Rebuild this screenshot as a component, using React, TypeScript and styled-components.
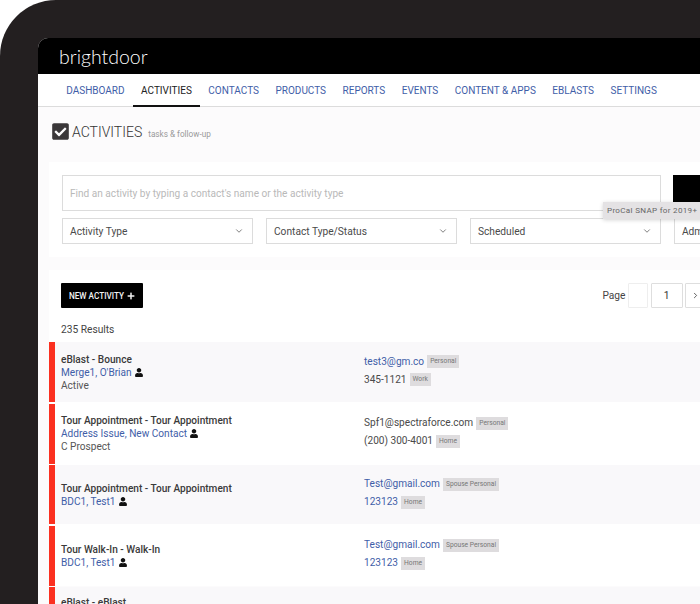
import React from "react";
import styled, { createGlobalStyle } from "styled-components";
import { FaCheckSquare, FaPlus, FaUser } from "react-icons/fa";
import { ChevronDown, ChevronRight } from "lucide-react";

const GlobalStyle = createGlobalStyle`
  html, body {
    margin: 0;
    padding: 0;
    background: #fff;
  }
  body {
    font-family: Roboto, "Liberation Sans", sans-serif;
  }
`;

const Device = styled.div`
  width: 700px;
  height: 604px;
  box-sizing: border-box;
  padding: 38px 0 0 38px;
  background: #231f20;
  border-top-left-radius: 56px;
  overflow: hidden;
`;

const Screen = styled.div`
  position: relative;
  width: 662px;
  height: 566px;
  background: #fcfbfc;
  border-top-left-radius: 10px;
  overflow: hidden;
`;

const TopBar = styled.header`
  height: 36px;
  padding-left: 21px;
  display: flex;
  align-items: center;
  background: #000;
`;

const Logo = styled.div`
  color: #fff;
  font-family: Lato, sans-serif;
  font-weight: 300;
  font-size: 19.5px;
`;

const Nav = styled.nav`
  height: 33px;
  box-sizing: border-box;
  padding-left: 20px;
  display: flex;
  background: #fff;
  border-bottom: 1px solid #dcdcdc;
`;

const NavItem = styled.a<{ $active?: boolean }>`
  padding: 0 8.25px;
  height: 33px;
  box-sizing: border-box;
  line-height: 33px;
  font-size: 10px;
  white-space: nowrap;
  color: ${(p) => (p.$active ? "#222" : "#3f5ea8")};
  border-bottom: 2px solid ${(p) => (p.$active ? "#111" : "transparent")};
`;

const Heading = styled.div`
  height: 55px;
  padding: 15px 0 0 14px;
  box-sizing: border-box;
  display: flex;
  align-items: flex-start;
  color: #3a3739;

  svg {
    width: 17px;
    height: 19px;
  }
`;

const HeadingRow = styled.div`
  height: 19px;
  display: flex;
  align-items: center;
`;

const HeadingTitle = styled.h1`
  margin: 0 6px 0 3px;
  font-size: 14px;
  font-weight: 300;
  color: #333;
`;

const HeadingSub = styled.span`
  font-size: 8.2px;
  margin-top: 5px;
  color: #999;
`;

const Panel = styled.section`
  margin-left: 11px;
  background: #fff;
`;

const FilterPanel = styled(Panel)`
  height: 95px;
  padding: 13px 0 0 13px;
  box-sizing: border-box;
`;

const SearchRow = styled.div`
  display: flex;
  gap: 12px;
`;

const SearchBox = styled.div`
  width: 599px;
  height: 36px;
  flex: none;
  box-sizing: border-box;
  padding-left: 7px;
  display: flex;
  align-items: center;
  border: 1px solid #dcdcdc;
  font-size: 10.1px;
  color: #b9b9b9;
`;

const SearchButton = styled.div`
  width: 60px;
  height: 36px;
  flex: none;
  background: #000;
`;

const SelectRow = styled.div`
  margin-top: 7px;
  display: flex;
  gap: 12.7px;
`;

const Select = styled.div`
  width: 191.3px;
  height: 26px;
  flex: none;
  box-sizing: border-box;
  padding: 0 8px 0 7px;
  display: flex;
  align-items: center;
  justify-content: space-between;
  border: 1px solid #dcdcdc;
  font-size: 10.2px;
  color: #4a4a4a;
  white-space: nowrap;

  svg {
    width: 10px;
    height: 10px;
    color: #666;
  }
`;

const Tooltip = styled.div`
  position: absolute;
  left: 565px;
  top: 164px;
  height: 17px;
  width: 110px;
  box-sizing: border-box;
  padding-left: 4px;
  line-height: 17px;
  background: #e4e2e4;
  box-shadow: 0 1px 4px rgba(0, 0, 0, 0.18);
  font-size: 8.1px;
  letter-spacing: 0.3px;
  color: #666;
  white-space: nowrap;
`;

const ResultsPanel = styled(Panel)`
  margin-top: 13px;
  height: 296px;
`;

const Toolbar = styled.div`
  height: 72px;
  padding: 13px 0 0 12px;
  box-sizing: border-box;
  display: flex;
  justify-content: space-between;
  align-items: flex-start;
`;

const ToolbarLeft = styled.div`
  display: flex;
  flex-direction: column;
  gap: 16px;
`;

const NewButton = styled.div`
  width: 82px;
  height: 25px;
  display: flex;
  align-items: center;
  justify-content: center;
  gap: 3px;
  background: #000;
  border-radius: 1px;
  color: #f2f2f2;
  font-size: 8.2px;
  font-weight: 500;

  svg {
    width: 8px;
    height: 8px;
  }
`;

const ResultCount = styled.div`
  font-size: 10.2px;
  color: #444;
`;

const Pager = styled.div`
  margin-right: -5px;
  display: flex;
  align-items: center;
  gap: 2.5px;
  font-size: 10.2px;
  color: #444;
`;

const PageBox = styled.div<{ $width: number; $faded?: boolean }>`
  width: ${(p) => p.$width}px;
  height: 25px;
  box-sizing: border-box;
  display: flex;
  align-items: center;
  justify-content: center;
  border: 1px solid ${(p) => (p.$faded ? "#eee" : "#dedede")};
  border-radius: 1px;
  color: #333;

  svg {
    width: 9px;
    height: 9px;
  }
`;

const Row = styled.div<{ $shaded: boolean; $height: number }>`
  height: ${(p) => p.$height}px;
  margin-bottom: 1.5px;
  display: flex;
  border-left: 6px solid #fb3020;
  background: ${(p) => (p.$shaded ? "#f9f8fa" : "#fff")};
`;

const RowMain = styled.div`
  width: 309px;
  flex: none;
  box-sizing: border-box;
  padding-left: 6px;
  display: flex;
  flex-direction: column;
  justify-content: center;
  font-size: 10.1px;
  line-height: 13px;
  color: #555;
`;

const RowTitle = styled.div`
  font-weight: 500;
  color: #3a3a3a;
`;

const RowLink = styled.div`
  display: flex;
  align-items: center;
  gap: 3px;
  color: #3f5ea8;

  svg {
    width: 8px;
    height: 9px;
    color: #111;
  }
`;

const RowContact = styled.div`
  padding-bottom: 4px;
  display: flex;
  flex-direction: column;
  justify-content: center;
  gap: 4px;
  font-size: 10.1px;
`;

const ContactLine = styled.div<{ $link?: boolean }>`
  height: 14px;
  display: flex;
  align-items: center;
  gap: 3px;
  color: ${(p) => (p.$link ? "#3f5ea8" : "#4a4a4a")};
`;

const Tag = styled.span`
  height: 13px;
  padding: 0 3px;
  margin-top: 1px;
  line-height: 13px;
  background: #dedcde;
  font-size: 6.7px;
  color: #777;
`;

type Activity = {
  title: string;
  name?: string;
  status?: string;
  height: number;
  email?: [string, string, boolean];
  phone?: [string, string, boolean];
};

const activities: Activity[] = [
  {
    title: "eBlast - Bounce",
    name: "Merge1, O'Brian",
    status: "Active",
    height: 60,
    email: ["test3@gm.co", "Personal", true],
    phone: ["345-1121", "Work", false],
  },
  {
    title: "Tour Appointment - Tour Appointment",
    name: "Address Issue, New Contact",
    status: "C Prospect",
    height: 60,
    email: ["Spf1@spectraforce.com", "Personal", false],
    phone: ["(200) 300-4001", "Home", false],
  },
  {
    title: "Tour Appointment - Tour Appointment",
    name: "BDC1, Test1",
    height: 59,
    email: ["Test@gmail.com", "Spouse Personal", true],
    phone: ["123123", "Home", true],
  },
  {
    title: "Tour Walk-In - Walk-In",
    name: "BDC1, Test1",
    height: 60,
    email: ["Test@gmail.com", "Spouse Personal", true],
    phone: ["123123", "Home", true],
  },
  // only the top of this row is on screen
  { title: "eBlast - eBlast", height: 30 },
];

const navItems = [
  "DASHBOARD",
  "ACTIVITIES",
  "CONTACTS",
  "PRODUCTS",
  "REPORTS",
  "EVENTS",
  "CONTENT & APPS",
  "EBLASTS",
  "SETTINGS",
];

const App: React.FC = () => {
  return (
    <Device>
      <GlobalStyle />
      <Screen>
        <TopBar>
          <Logo>brightdoor</Logo>
        </TopBar>
        <Nav>
          {navItems.map((item) => (
            <NavItem key={item} $active={item === "ACTIVITIES"}>
              {item}
            </NavItem>
          ))}
        </Nav>
        <Heading>
          <HeadingRow>
            <FaCheckSquare />
            <HeadingTitle>ACTIVITIES</HeadingTitle>
            <HeadingSub>tasks &amp; follow-up</HeadingSub>
          </HeadingRow>
        </Heading>
        <FilterPanel>
          <SearchRow>
            <SearchBox>
              Find an activity by typing a contact's name or the activity type
            </SearchBox>
            <SearchButton />
          </SearchRow>
          <SelectRow>
            <Select>
              Activity Type
              <ChevronDown />
            </Select>
            <Select>
              Contact Type/Status
              <ChevronDown />
            </Select>
            <Select>
              Scheduled
              <ChevronDown />
            </Select>
            <Select>Admin</Select>
          </SelectRow>
        </FilterPanel>
        <Tooltip>ProCal SNAP for 2019+</Tooltip>
        <ResultsPanel>
          <Toolbar>
            <ToolbarLeft>
              <NewButton>
                NEW ACTIVITY
                <FaPlus />
              </NewButton>
              <ResultCount>235 Results</ResultCount>
            </ToolbarLeft>
            <Pager>
              <span>Page</span>
              <PageBox $width={20} $faded />
              <PageBox $width={32}>1</PageBox>
              <PageBox $width={20}>
                <ChevronRight />
              </PageBox>
            </Pager>
          </Toolbar>
          {activities.map((a, i) => (
            <Row key={i} $shaded={i % 2 === 0} $height={a.height}>
              <RowMain>
                <RowTitle>{a.title}</RowTitle>
                {a.name && (
                  <RowLink>
                    {a.name}
                    <FaUser />
                  </RowLink>
                )}
                {a.status && <div>{a.status}</div>}
              </RowMain>
              {a.email && a.phone && (
                <RowContact>
                  <ContactLine $link={a.email[2]}>
                    {a.email[0]}
                    <Tag>{a.email[1]}</Tag>
                  </ContactLine>
                  <ContactLine $link={a.phone[2]}>
                    {a.phone[0]}
                    <Tag>{a.phone[1]}</Tag>
                  </ContactLine>
                </RowContact>
              )}
            </Row>
          ))}
        </ResultsPanel>
      </Screen>
    </Device>
  );
};

export default App;
